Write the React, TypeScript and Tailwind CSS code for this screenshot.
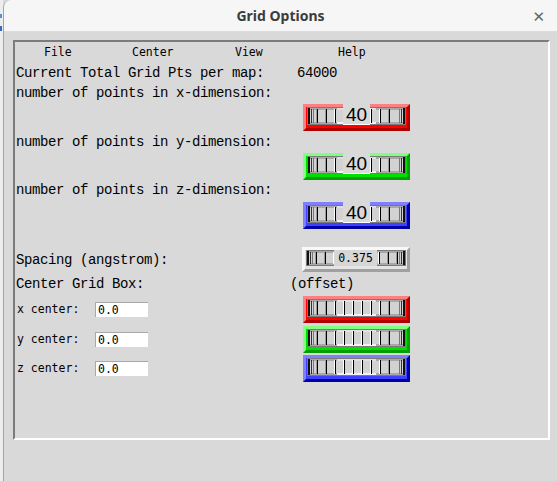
import React from "react";

const serif = "font-['Liberation_Mono',monospace] text-[14px] tracking-[-0.4px] leading-[20px]";
const fixed = "font-['DejaVu_Sans_Mono',monospace] text-[11.5px] leading-[15px]";

type Scheme = { light: string; fill: string; dark: string };

const RED: Scheme = { light: "#ff8080", fill: "#ff0000", dark: "#b00000" };
const GREEN: Scheme = { light: "#80ff80", fill: "#00e000", dark: "#00a000" };
const BLUE: Scheme = { light: "#8080ff", fill: "#4040ff", dark: "#0000a8" };
const GRAY: Scheme = { light: "#f8f8f8", fill: "#e4e4e4", dark: "#a0a0a0" };

// the knurled wheel inside a dial
const Stripes = ({ w, h }: { w: number; h: number }) => {
  const lines: React.ReactNode[] = [];
  const step = 9;
  const mid = w / 2;
  for (let x = 9; x < w - 9; x += step) {
    const bright = Math.abs(x - mid) < w * 0.3;
    lines.push(
      <g key={x}>
        <rect x={x} y={2} width={1} height={h - 4} fill={bright ? "#fff" : "#9a9a9a"} />
        <rect x={x + 1} y={2} width={1} height={h - 4} fill="#000" />
      </g>
    );
  }
  return (
    <svg width={w} height={h} shapeRendering="crispEdges" className="block">
      <rect x={0} y={0} width={w} height={h} fill="#d2d2d2" />
      <rect x={0} y={1} width={w} height={2} fill="#a8a8a8" />
      <rect x={0} y={h - 3} width={w} height={2} fill="#a8a8a8" />
      <rect x={w * 0.3} y={1} width={w * 0.4} height={2} fill="#e0e0e0" />
      <rect x={w * 0.3} y={h - 3} width={w * 0.4} height={2} fill="#f4f4f4" />
      {lines}
      <rect x={1} y={1} width={2} height={h - 2} fill="#111" />
      <rect x={4} y={2} width={1} height={h - 4} fill="#333" />
      <rect x={6} y={2} width={1} height={h - 4} fill="#777" />
      <rect x={w - 3} y={1} width={2} height={h - 2} fill="#111" />
      <rect x={w - 5} y={2} width={1} height={h - 4} fill="#333" />
      <rect x={w - 7} y={2} width={1} height={h - 4} fill="#777" />
      <rect x={0.5} y={0.5} width={w - 1} height={h - 1} fill="none" stroke="#7a7a7a" />
    </svg>
  );
};

const Dial = ({
  s,
  w = 107,
  h = 27,
  value,
  small,
}: {
  s: Scheme;
  w?: number;
  h?: number;
  value?: string;
  small?: boolean;
}) => (
  <div
    className="relative box-border border-[3px] px-[1px] pb-[3px]"
    style={{
      width: w,
      height: h,
      background: s.fill,
      borderTopColor: s.light,
      borderLeftColor: s.light,
      borderBottomColor: s.dark,
      borderRightColor: s.dark,
    }}
  >
    <Stripes w={w - 8} h={h - 9} />
    {value && !small && (
      <div className="absolute left-[37px] top-[-3px] w-[27px] h-[21px] bg-[#d9d9d9] border-b border-white flex items-center justify-center font-['Liberation_Sans',sans-serif] text-[19px] leading-none">
        {value}
      </div>
    )}
    {value && small && (
      <div className={`absolute left-[29px] top-0 w-[43px] h-[16px] bg-[#d6d6d6] flex items-center justify-center ${fixed}`}>
        {value}
      </div>
    )}
  </div>
);

const Field = ({ label }: { label: string }) => (
  <div className="flex items-center w-[288px]">
    <span className={`${fixed} w-[80px] pl-[2px]`}>{label}</span>
    <div className={`w-[53px] h-[15px] bg-white border-t border-l border-[#a8a8a8] pl-[2px] ${fixed} leading-[14px]`}>
      0.0
    </div>
  </div>
);

export default function App() {
  return (
    <div className="w-[557px] h-[481px] flex bg-[#d9d9d9] overflow-hidden text-black">
      <div className="w-[3px] h-full bg-[#ededed] flex flex-col pt-[14px] gap-[8px]">
        <div className="w-[2px] h-[4px] bg-[#5a8ad8]" />
        <div className="w-[2px] h-[5px] bg-[#3a6ac0]" />
      </div>
      <div className="flex-1 flex flex-col border-l border-[#a4a4a4] rounded-tl-[8px] overflow-hidden">
        {/* title bar */}
        <div className="h-[32px] shrink-0 bg-[#f6f6f6] border-b border-[#dcdcdc] relative flex items-center justify-center">
          <span className="font-['Noto_Sans',sans-serif] font-bold text-[14px] text-[#3c3c3c]">Grid Options</span>
          <span className="absolute right-[12px] top-[6px] font-['DejaVu_Sans',sans-serif] text-[15px] text-[#666]">✕</span>
        </div>

        {/* body */}
        <div className="flex-1 pl-[9px] pt-[8px]">
          <div className="w-[537px] h-[400px] box-border border-t-2 border-l-2 border-t-[#7c7c7c] border-l-[#7c7c7c] border-b-2 border-r-2 border-b-white border-r-white flex flex-col">
            {/* menu */}
            <div className={`h-[20px] flex items-center pl-[29px] ${fixed}`}>
              <span className="w-[88px]">File</span>
              <span className="w-[103px]">Center</span>
              <span className="w-[103px]">View</span>
              <span>Help</span>
            </div>

            <div className={`mt-[1px] h-[20px] flex items-center pl-[1px] ${serif}`}>
              <span className="w-[281px]">Current Total Grid Pts per map:</span>
              <span>64000</span>
            </div>

            <div className={`h-[20px] pl-[1px] ${serif}`}>number of points in x-dimension:</div>
            <div className="mt-[1px] pl-[288px]">
              <Dial s={RED} value="40" />
            </div>

            <div className={`mt-[1px] h-[20px] pl-[1px] ${serif}`}>number of points in y-dimension:</div>
            <div className="mt-[1px] pl-[288px]">
              <Dial s={GREEN} value="40" />
            </div>

            <div className={`h-[20px] pl-[1px] ${serif}`}>number of points in z-dimension:</div>
            <div className="mt-[2px] pl-[288px]">
              <Dial s={BLUE} value="40" />
            </div>

            <div className="mt-[18px] h-[25px] flex items-center">
              <span className={`w-[287px] pl-[1px] ${serif}`}>Spacing (angstrom):</span>
              <Dial s={GRAY} w={108} h={25} value="0.375" small />
            </div>

            <div className={`mt-[2px] h-[20px] flex items-center pl-[1px] ${serif}`}>
              <span className="w-[274px]">Center Grid Box:</span>
              <span>(offset)</span>
            </div>

            <div className="mt-[2px] flex items-center">
              <Field label="x center:" />
              <Dial s={RED} />
            </div>
            <div className="mt-[3px] flex items-center">
              <Field label="y center:" />
              <Dial s={GREEN} />
            </div>
            <div className="mt-[2px] flex items-center">
              <Field label="z center:" />
              <Dial s={BLUE} />
            </div>
          </div>
        </div>
      </div>
    </div>
  );
}
